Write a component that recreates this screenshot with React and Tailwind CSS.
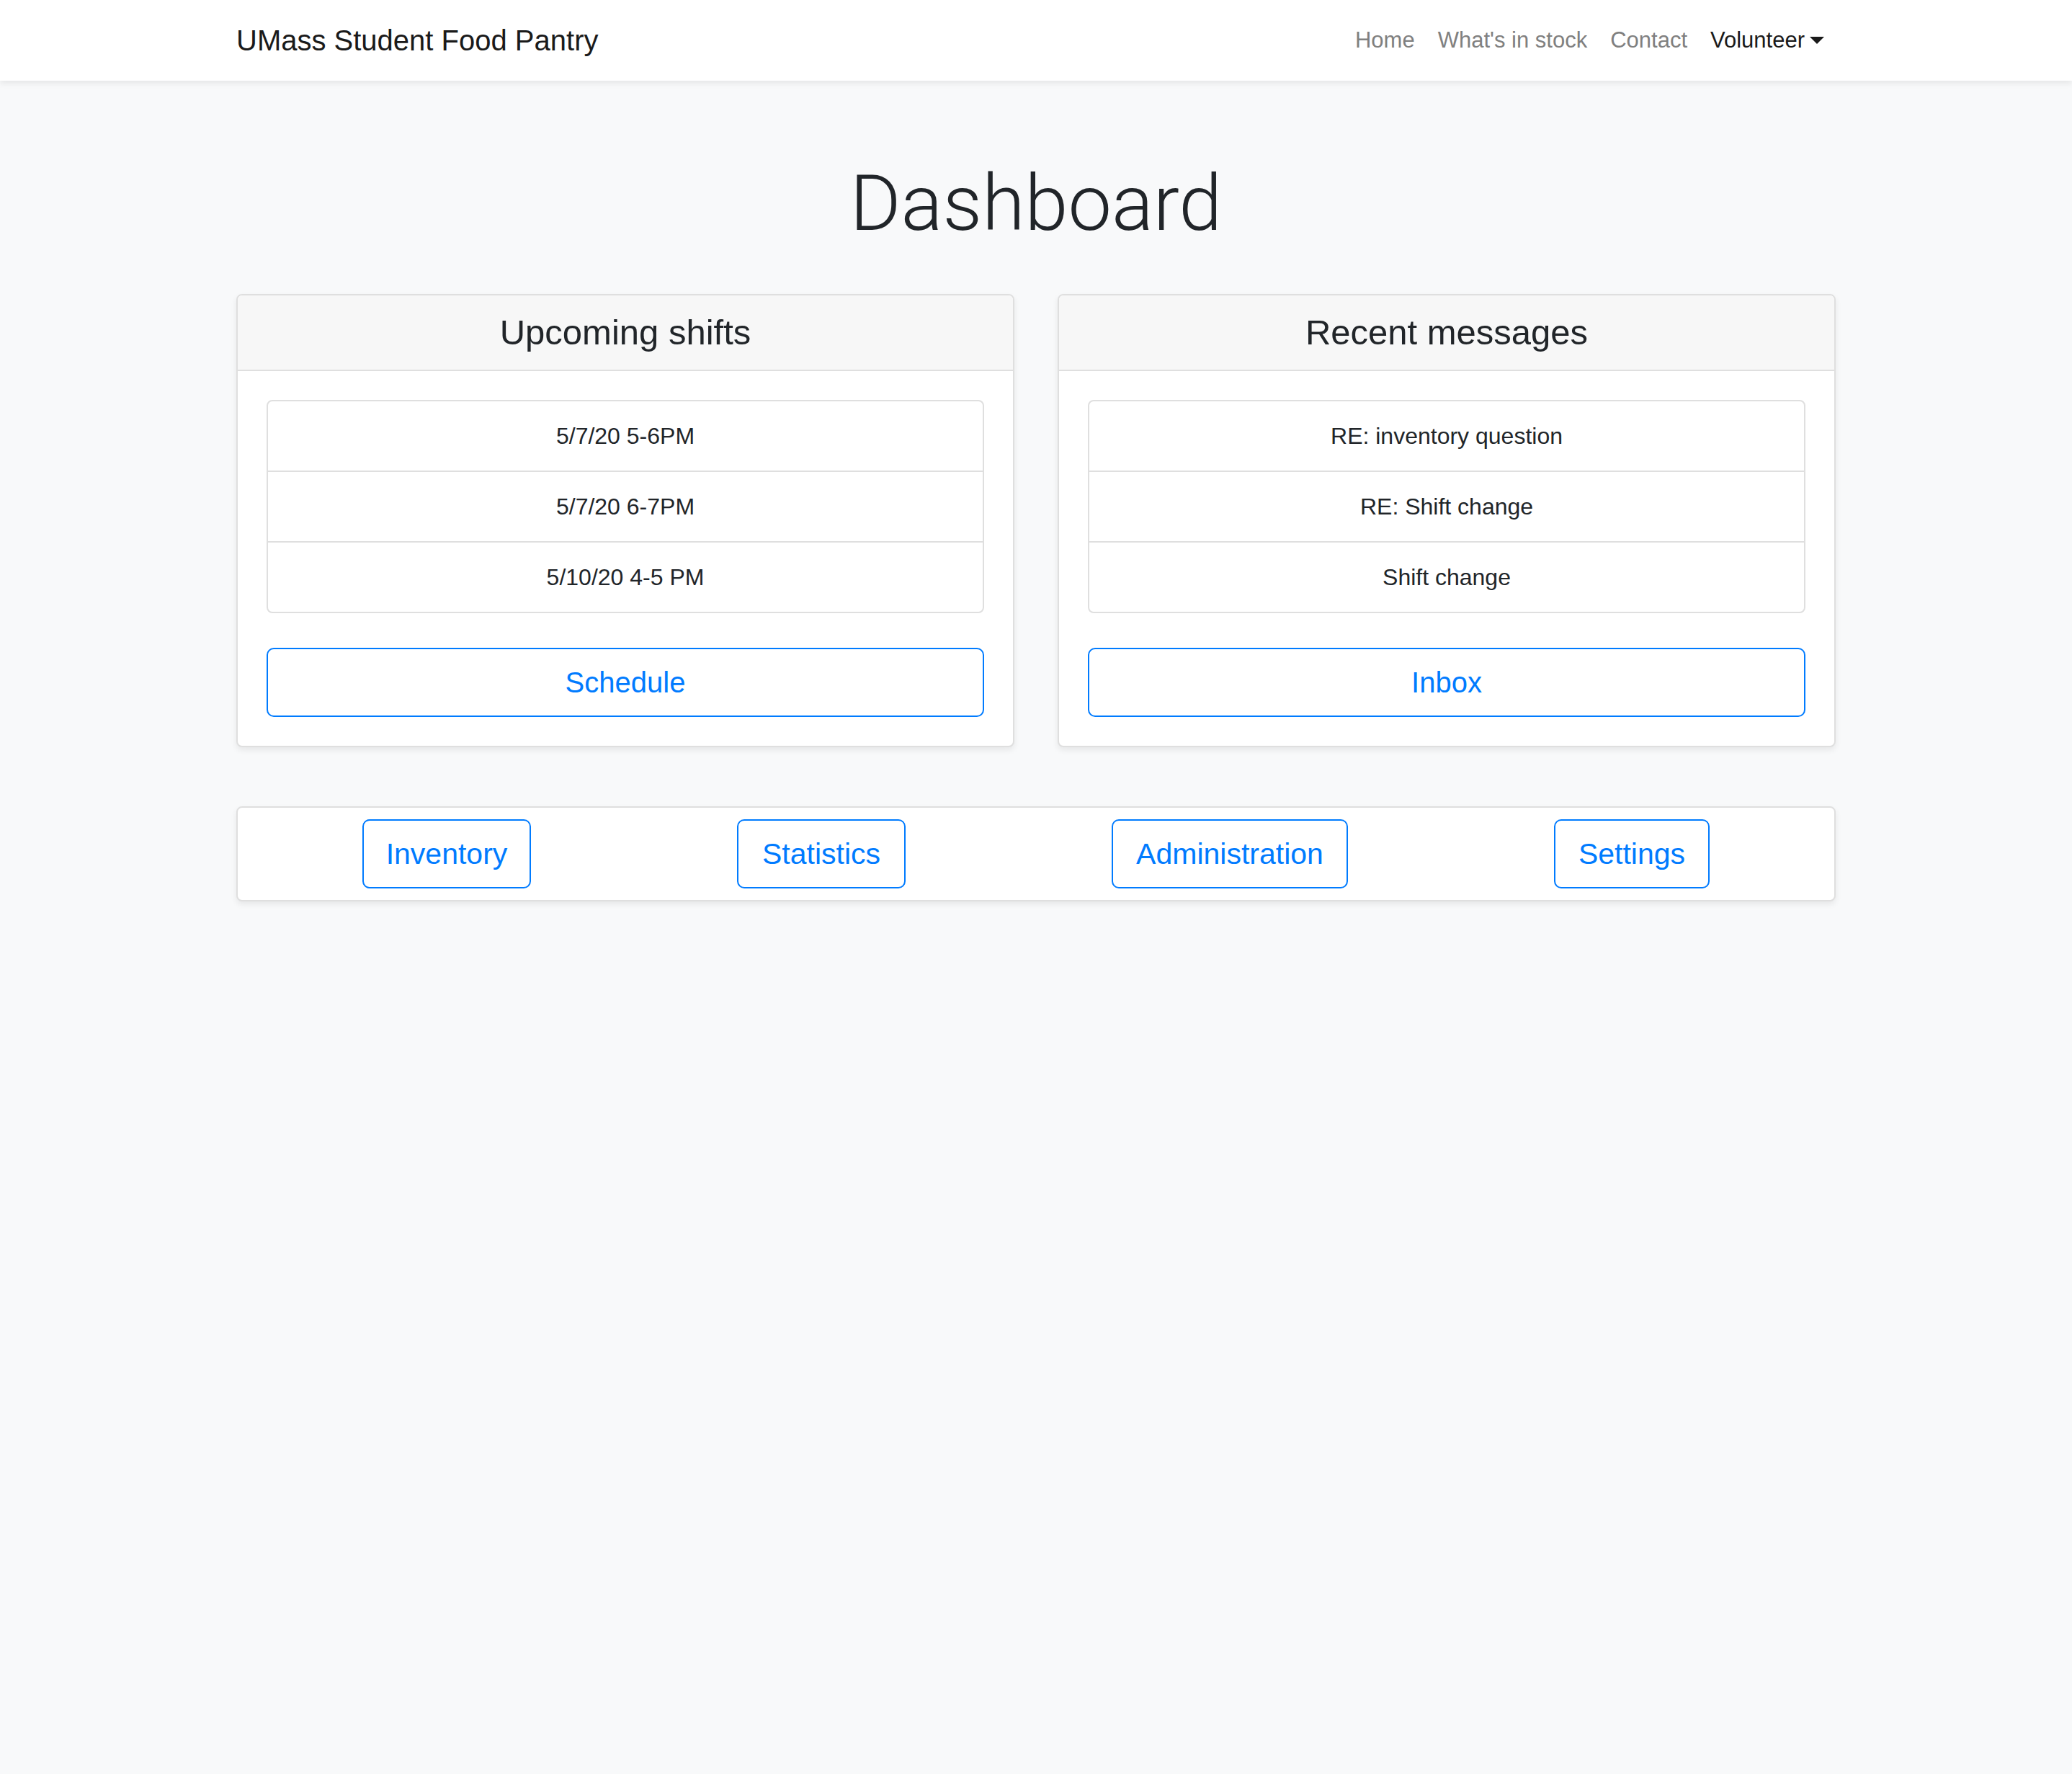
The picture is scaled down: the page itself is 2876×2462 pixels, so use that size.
import React from 'react';

const shifts = ['5/7/20 5-6PM', '5/7/20 6-7PM', '5/10/20 4-5 PM'];
const messages = ['RE: inventory question', 'RE: Shift change', 'Shift change'];
const tools = [
  { label: 'Inventory', width: 'w-[234px]' },
  { label: 'Statistics', width: 'w-[234px]' },
  { label: 'Administration', width: 'w-[328px]' },
  { label: 'Settings', width: 'w-[216px]' },
];

const DashCard = ({ title, items, action }) => (
  <div className="overflow-hidden rounded-[8px] border-2 border-[#dfdfdf] bg-white shadow-[0_4px_8px_rgba(0,0,0,0.075)]">
    <div className="border-b-2 border-[#dfdfdf] bg-[#f7f7f7] py-[24px] text-center text-[49px] leading-[55px] text-[#212529]">
      {title}
    </div>
    <div className="p-[40px]">
      <ul className="divide-y-2 divide-[#dfdfdf] rounded-[8px] border-2 border-[#dfdfdf]">
        {items.map((item) => (
          <li key={item} className="py-[24px] text-center text-[32px] leading-[48px] text-[#212529]">
            {item}
          </li>
        ))}
      </ul>
      <button
        type="button"
        className="mt-[48px] block w-full rounded-[10px] border-2 border-[#007bff] bg-white py-[16px] text-center text-[40px] leading-[60px] text-[#007bff]"
      >
        {action}
      </button>
    </div>
  </div>
);

const App = () => {
  return (
    <div className="min-h-screen bg-[#f8f9fa] font-['Liberation_Sans',Arial,sans-serif] text-[#212529]">
      <nav className="relative z-10 bg-white shadow-[0_4px_8px_rgba(0,0,0,0.075)]">
        <div className="mx-auto flex h-[112px] max-w-[2280px] items-center justify-between px-[30px]">
          <a className="text-[40px] leading-[60px] text-[#1a1a1a]">UMass Student Food Pantry</a>
          <ul className="flex items-center text-[31px] leading-[48px]">
            <li className="px-[16px] text-[#808080]">Home</li>
            <li className="px-[16px] text-[#808080]">What's in stock</li>
            <li className="px-[16px] text-[#808080]">Contact</li>
            <li className="flex items-center px-[16px] text-[#1a1a1a]">
              Volunteer
              <span className="ml-[7px] inline-block h-0 w-0 border-x-[10px] border-t-[10px] border-x-transparent border-t-[#1a1a1a]" />
            </li>
          </ul>
        </div>
      </nav>

      <main className="mx-auto max-w-[2280px] px-[30px] pt-[103px]">
        <h1 className="mb-[59px] text-center font-['Roboto',sans-serif] text-[108px] font-light leading-[134px] text-[#212529]">
          Dashboard
        </h1>

        <div className="grid grid-cols-2 gap-[60px]">
          <DashCard title="Upcoming shifts" items={shifts} action="Schedule" />
          <DashCard title="Recent messages" items={messages} action="Inbox" />
        </div>

        <div className="mt-[82px] flex justify-center gap-[286px] rounded-[8px] border-2 border-[#dfdfdf] bg-white py-[16px] shadow-[0_4px_8px_rgba(0,0,0,0.075)]">
          {tools.map((tool) => (
            <button
              key={tool.label}
              type="button"
              className={`${tool.width} rounded-[10px] border-2 border-[#007bff] bg-white py-[16px] text-center text-[41px] leading-[60px] text-[#007bff]`}
            >
              {tool.label}
            </button>
          ))}
        </div>
      </main>
    </div>
  );
};

export default App;
